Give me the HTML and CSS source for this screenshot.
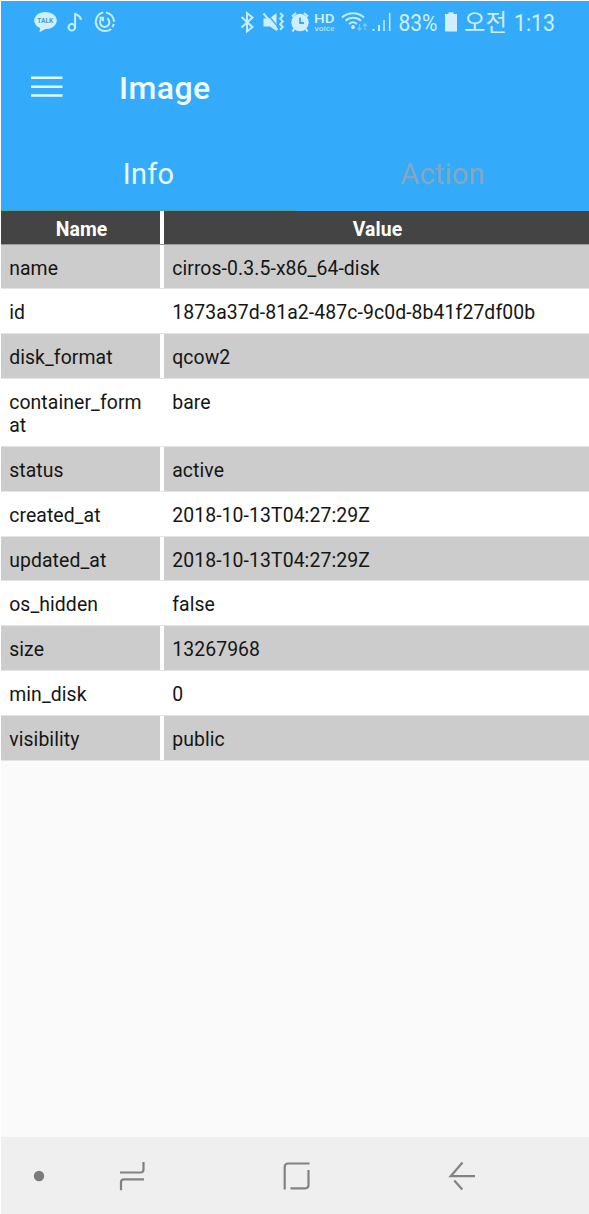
FILE: index.html
```html
<!DOCTYPE html>
<html lang="ko">
<head>
<meta charset="utf-8">
<title>Image</title>
<link rel="stylesheet" href="styles.css">
</head>
<body>
<div class="screen">
  <header class="top">
    <div class="status">
      <svg class="status-left" width="84" height="24" viewBox="33 10 84 24">
        <path class="fill" d="M45.500 12c6.500 0 11.300 3.700 11.300 8.500s-4.800 8.600-11.300 8.600l-6 3.200.6-4.300c-3.700-1.500-5.900-4.300-5.900-7.500 0-4.800 4.800-8.500 11.300-8.500z"/>
        <text class="talk" x="37.300" y="23.200" textLength="16" lengthAdjust="spacingAndGlyphs">TALK</text>
        <g class="line"><circle cx="71.800" cy="27.200" r="3.300"/><path d="M75.100 27.500V13c.8 2.500 6 2.200 5.800 7"/>
        <path d="M103.200 12.600a9.300 9.300 0 1 0 7.800 16.300M106 12.600a9.300 9.300 0 0 1 8 9.200M113.800 24a9.300 9.300 0 0 1-1.500 3.200"/><path d="M107.300 18.300a4.700 4.700 0 1 1-6 .6M99.500 17.800h3.500v3.500"/></g>
      </svg>
      <svg class="status-right" width="320" height="40" viewBox="238 2 320 40">
        <path class="line" d="M241.500 17l11 10-5.500 4.500V13l5.500 4.500-11 10"/>
        <path class="fill" d="M263.500 18.500h6l7-5.500v18l-6.500-4.500h-6.500z"/>
        <path class="cut" d="M265.500 12l13 15.500"/>
        <path class="line" d="M263.500 13.500l14 16.500"/>
        <path class="line" d="M280.200 13l2.500 2.800-2.500 2.800 2.500 2.800-2.500 2.800 2.500 2.800-2.500 2.800"/>
        <circle class="fill" cx="300" cy="22.500" r="8.700"/>
        <path class="line" d="M292 16.500l4-3.500M308 16.500l-4-3.500M294.500 28.500l-2 3M305.500 28.500l2 3"/>
        <path class="clock" d="M300 17.500v5.500h4"/>
        <text class="hd" x="314" y="22.500" textLength="20.500" lengthAdjust="spacingAndGlyphs">HD</text>
        <text class="voice" x="314.500" y="30.500" textLength="20" lengthAdjust="spacingAndGlyphs">voice</text>
        <path class="line" d="M342 17.500c6-5.700 16-5.700 22 0M345.500 20.700c4.500-4 11-4 15.500 0M349 24c2.500-2.200 5.500-2.200 8 0"/>
        <circle class="fill" cx="353" cy="27" r="1.900"/>
        <path class="faint" d="M359.500 24v6l-2-2m2 2l2-2M365 30v-6l-2 2m2-2l2 2"/>
        <path class="line" d="M373.500 29v2M379 25v6"/>
        <path class="line thin" d="M384 20v11M389.700 13v18"/>
        <text class="time" x="398.500" y="31" textLength="39" lengthAdjust="spacingAndGlyphs">83%</text>
        <path class="fill" d="M448.500 12.200h5V14h3.500v17.500h-12V14h3.500z"/>
        <text class="time" x="464" y="31" textLength="43" lengthAdjust="spacingAndGlyphs">오전</text>
        <text class="time" x="514" y="31" textLength="41" lengthAdjust="spacingAndGlyphs">1:13</text>
      </svg>
    </div>
    <div class="appbar">
      <svg width="32" height="22" viewBox="0 0 32 22"><path class="menu" d="M0 1.800h31.500M0 10.800h31.500M0 19.500h31.500"/></svg>
      <h1 class="title">Image</h1>
    </div>
    <nav class="tabs">
      <div class="tab active">Info</div>
      <div class="tab">Action</div>
    </nav>
  </header>
  <main class="table">
    <div class="row head"><div class="key">Name</div><div class="val">Value</div></div>
    <div class="row odd"><div class="key">name</div><div class="val">cirros-0.3.5-x86_64-disk</div></div>
    <div class="row"><div class="key">id</div><div class="val">1873a37d-81a2-487c-9c0d-8b41f27df00b</div></div>
    <div class="row odd"><div class="key">disk_format</div><div class="val">qcow2</div></div>
    <div class="row"><div class="key">container_form<br>at</div><div class="val">bare</div></div>
    <div class="row odd"><div class="key">status</div><div class="val">active</div></div>
    <div class="row"><div class="key">created_at</div><div class="val">2018-10-13T04:27:29Z</div></div>
    <div class="row odd"><div class="key">updated_at</div><div class="val">2018-10-13T04:27:29Z</div></div>
    <div class="row"><div class="key">os_hidden</div><div class="val">false</div></div>
    <div class="row odd"><div class="key">size</div><div class="val">13267968</div></div>
    <div class="row"><div class="key">min_disk</div><div class="val">0</div></div>
    <div class="row odd"><div class="key">visibility</div><div class="val">public</div></div>
  </main>
  <footer class="navbar">
    <svg width="588" height="77" viewBox="1 1137 588 77">
      <circle class="dot" cx="39" cy="1176" r="5.200"/>
      <g class="nav">
        <path d="M120 1172.500h20.500q3 0 3-3V1162M144 1179.300h-20q-3 0-3 3v8"/>
        <path d="M284.700 1189.500v-22.500q0-3.500 3.500-3.500H309.500M308.500 1170v15q0 3.300-3.300 3.300H290.500"/>
        <path d="M475 1176.200H450.700L462.500 1162.500M454.300 1180.500l8 9"/>
      </g>
    </svg>
  </footer>
</div>
</body>
</html>
```
FILE: styles.css
```css
body {
  margin: 0;
  background: #fff;
  font-family: Roboto, "Noto Sans CJK KR", sans-serif;
}
.screen {
  display: flex;
  flex-direction: column;
  box-sizing: border-box;
  height: 1214px;
  padding: 1px 0 0 1px;
  background: #fafafa;
  box-shadow: inset 1px 1px #fff;
}
.top { background: #34aafa; height: 210px; }
.status {
  display: flex;
  justify-content: space-between;
  align-items: flex-start;
  height: 43px;
  box-sizing: border-box;
  padding: 1px 31px 0 32px;
}
.status-left { margin-top: 8px; }
.status-right { overflow: visible; }
.fill { fill: #cfefff; }
.line { fill: none; stroke: #c4edff; stroke-width: 2; }
.thin { stroke-width: 1.5; }
.cut { stroke: #34aafa; stroke-width: 1.2; }
.clock { fill: none; stroke: #34aafa; stroke-width: 1.800; }
.faint { fill: none; stroke: #7fcbfc; stroke-width: 1.2; }
.talk { font-size: 7.5px; font-weight: 700; fill: #4a9cc4; }
.hd { font-size: 13px; font-weight: 500; fill: #cfefff; }
.voice { font-family: "Liberation Sans", sans-serif; font-size: 8px; font-weight: 700; fill: #a9dffd; }
.time { font-size: 24px; fill: #cfefff; }
.appbar {
  display: flex;
  align-items: center;
  gap: 56px;
  height: 86px;
  padding-left: 30px;
}
.menu { stroke: #e2faff; stroke-width: 2.600; }
.title {
  margin: 1px 0 0;
  font-size: 32px;
  line-height: 40px;
  font-weight: 500;
  letter-spacing: 0.400px;
  color: #f0fcff;
}
.tabs { display: flex; height: 81px; }
.tab {
  flex: 1;
  box-sizing: border-box;
  padding: 26px 0 0 1px;
  text-align: center;
  font-size: 29px;
  line-height: 36px;
  letter-spacing: 0.200px;
  color: #88a6bb;
}
.active { color: #e6faff; border-bottom: 2px solid #4fa5a8; }
.row {
  display: flex;
  gap: 4px;
  box-sizing: border-box;
  min-height: 44.880px;
  background: #fff;
  border-bottom: 1px solid #e4e4e4;
  font-size: 19.400px;
  line-height: 22.860px;
  letter-spacing: 0.090px;
  color: #151515;
}
.key, .val { box-sizing: border-box; padding: 13px 8px 8px 8.200px; }
.key { width: 159px; flex: none; white-space: nowrap; }
.val { flex: 1; }
.odd .key, .odd .val { background: #ccc; }
.head {
  min-height: 33.500px;
  height: 33.500px;
  border-bottom-color: #999;
  font-weight: 700;
  text-align: center;
  color: #fff;
}
.head .key, .head .val { background: #444; padding: 7.500px 0 0 2px; }
.navbar { margin-top: auto; height: 77px; background: #efefef; }
.navbar svg { display: block; }
.nav { fill: none; stroke: #828282; stroke-width: 2.200; }
.dot { fill: #7b7b7b; }
```
